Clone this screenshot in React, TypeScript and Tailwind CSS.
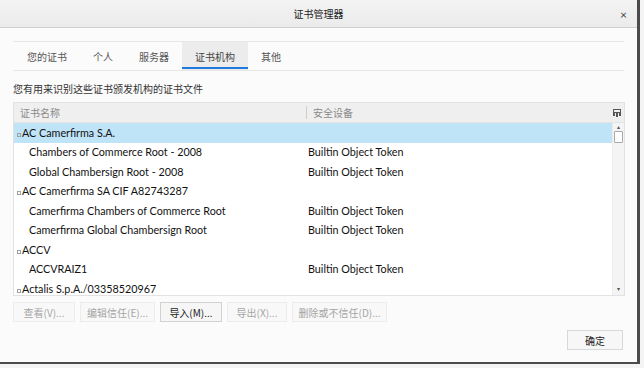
import React from "react";

const cjk = { fontFamily: '"Noto Sans CJK SC", "Noto Sans", sans-serif' };
const latin = { fontFamily: 'Lato, "Noto Sans CJK SC", sans-serif' };

const tabs = ["您的证书", "个人", "服务器", "证书机构", "其他"];

const rows = [
    { name: "AC Camerfirma S.A.", token: "", group: true, selected: true },
    { name: "Chambers of Commerce Root - 2008", token: "Builtin Object Token" },
    { name: "Global Chambersign Root - 2008", token: "Builtin Object Token" },
    { name: "AC Camerfirma SA CIF A82743287", token: "", group: true },
    { name: "Camerfirma Chambers of Commerce Root", token: "Builtin Object Token" },
    { name: "Camerfirma Global Chambersign Root", token: "Builtin Object Token" },
    { name: "ACCV", token: "", group: true },
    { name: "ACCVRAIZ1", token: "Builtin Object Token" },
    { name: "Actalis S.p.A./03358520967", token: "", group: true },
];

const buttons = [
    { label: "查看(V)...", enabled: false, w: "w-[62px]" },
    { label: "编辑信任(E)...", enabled: false, w: "w-[75px]" },
    { label: "导入(M)...", enabled: true, w: "w-[62px]" },
    { label: "导出(X)...", enabled: false, w: "w-[60px]" },
    { label: "删除或不信任(D)...", enabled: false, w: "w-[95px]" },
];

function App() {
    return (
        <div className="w-[644px] h-[368px] bg-[#f4f4f4] overflow-hidden">
            <div className="w-[640px] h-[364px] bg-[#fbfbfb] border-r-[3px] border-b-[2px] border-[#4b4b4b] flex flex-col">
                {/* Titlebar */}
                <div className="h-[28px] bg-gradient-to-b from-[#f3f3f3] to-[#ebebeb] border-b border-[#cfcfcf] relative flex items-center justify-center">
                    <span className="text-[10px] text-[#222]" style={cjk}>证书管理器</span>
                    <span className="absolute right-[10px] top-[6px] text-[12px] text-[#444]" style={latin}>×</span>
                </div>

                <div className="px-[13px] flex flex-col">
                    {/* Tabs */}
                    <div className="mt-[13px] h-[30px] w-[611px] border-t border-b border-[#e7e7e7] flex items-stretch pl-[1px]">
                        {tabs.map((t, i) => (
                            <div
                                key={t}
                                className={
                                    "relative flex items-center px-[13px] text-[10px] " +
                                    (i === 3 ? "bg-[#ececec] text-[#444]" : "text-[#555]")
                                }
                                style={cjk}
                            >
                                {t}
                                {i === 3 && <div className="absolute left-0 right-0 bottom-[1px] h-[2px] bg-[#1f7ae0]" />}
                            </div>
                        ))}
                    </div>

                    <div className="mt-[11px] text-[10px] text-[#333] leading-[14px]" style={cjk}>
                        您有用来识别这些证书颁发机构的证书文件
                    </div>

                    {/* Table */}
                    <div className="mt-[6px] w-[612px] h-[194px] border border-[#e2e2e2] bg-white flex flex-col">
                        <div className="h-[20px] bg-[#efefef] border-b border-[#e4e4e4] flex items-center text-[10px] text-[#8a8a8a]" style={cjk}>
                            <div className="w-[292px] pl-[6px]">证书名称</div>
                            <div className="w-[1px] h-[13px] bg-[#cfcfcf]" />
                            <div className="flex-1 pl-[6px]">安全设备</div>
                            <div className="w-[14px] flex justify-center">
                                <svg width="8" height="8" viewBox="0 0 8 8">
                                    <rect x="0.5" y="0.5" width="7" height="3" fill="none" stroke="#555" />
                                    <rect x="0" y="4" width="2" height="3" fill="#555" />
                                    <rect x="3" y="4" width="2" height="4" fill="#555" />
                                    <rect x="6" y="4" width="2" height="3" fill="#555" />
                                </svg>
                            </div>
                        </div>
                        <div className="flex flex-1 overflow-hidden">
                            <div className="flex-1 overflow-hidden">
                                {rows.map((r) => (
                                    <div
                                        key={r.name}
                                        className={
                                            "h-[19.5px] flex items-center text-[10.75px] text-[#111] " +
                                            (r.selected ? "bg-[#bfe4f8]" : "")
                                        }
                                        style={latin}
                                    >
                                        <div className={"w-[293px] flex items-center whitespace-nowrap " + (r.group ? "pl-[3px]" : "pl-[15px]")}>
                                            {r.group && (
                                                <svg width="4" height="4" viewBox="0 0 4 4" className="mr-[1px] mt-[4px]">
                                                    <rect x="0.5" y="0.5" width="3" height="3" fill="none" stroke="#a0a0a0" strokeWidth="1" />
                                                </svg>
                                            )}
                                            {r.name}
                                        </div>
                                        <div className="pl-[1px] whitespace-nowrap">{r.token}</div>
                                    </div>
                                ))}
                            </div>
                            {/* Scrollbar */}
                            <div className="w-[12px] bg-[#f4f4f4] border-l border-[#ececec] flex flex-col items-center">
                                <div className="h-[8px] text-[6px] leading-[8px] text-[#555]">▴</div>
                                <div className="w-[9px] h-[12px] bg-white border border-[#a8a8a8] rounded-[1px]" />
                                <div className="flex-1" />
                                <div className="h-[10px] text-[6px] leading-[8px] text-[#555]">▾</div>
                            </div>
                        </div>
                    </div>

                    {/* Buttons */}
                    <div className="mt-[6px] flex gap-[5px]">
                        {buttons.map((b) => (
                            <div
                                key={b.label}
                                className={
                                    b.w +
                                    " h-[20px] flex items-center justify-center text-[10px] border " +
                                    (b.enabled
                                        ? "border-[#d2d2d2] bg-[#f6f6f6] text-[#222]"
                                        : "border-[#ececec] bg-[#f8f8f8] text-[#a5a5a5]")
                                }
                                style={cjk}
                            >
                                {b.label}
                            </div>
                        ))}
                    </div>

                    <div className="mt-[8px] flex justify-end pr-[1px]">
                        <div className="w-[56px] h-[20px] flex items-center justify-center text-[10px] text-[#222] border border-[#d8d8d8] bg-[#f7f7f7]" style={cjk}>
                            确定
                        </div>
                    </div>
                </div>
            </div>
        </div>
    );
}

export default App;
